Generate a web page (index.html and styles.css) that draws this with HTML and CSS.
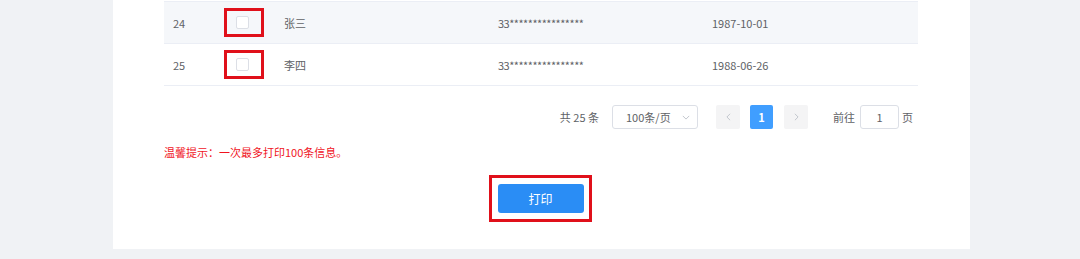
FILE: index.html
```html
<!DOCTYPE html>
<html lang="zh">
<head>
<meta charset="utf-8">
<link rel="stylesheet" href="styles.css">
</head>
<body>
<div class="card">
  <div class="table">
    <div class="row hover">
      <div class="cell c-idx">24</div>
      <div class="cell c-chk"><span class="mark"><span class="checkbox"></span></span></div>
      <div class="cell c-name">张三</div>
      <div class="cell c-id">33****************</div>
      <div class="cell c-date">1987-10-01</div>
    </div>
    <div class="row">
      <div class="cell c-idx">25</div>
      <div class="cell c-chk"><span class="mark"><span class="checkbox"></span></span></div>
      <div class="cell c-name">李四</div>
      <div class="cell c-id">33****************</div>
      <div class="cell c-date">1988-06-26</div>
    </div>
  </div>
  <div class="pager">
    <span class="total">共 25 条</span>
    <span class="sizes">100条/页<svg class="caret" viewBox="0 0 10 6" width="8" height="5"><path d="M1 1 L5 5 L9 1" fill="none" stroke="#c0c4cc" stroke-width="1.2"/></svg></span>
    <span class="btn-nav"><svg viewBox="0 0 6 10" width="5" height="8"><path d="M5 1 L1 5 L5 9" fill="none" stroke="#c0c4cc" stroke-width="1.2"/></svg></span>
    <span class="page active">1</span>
    <span class="btn-nav"><svg viewBox="0 0 6 10" width="5" height="8"><path d="M1 1 L5 5 L1 9" fill="none" stroke="#c0c4cc" stroke-width="1.2"/></svg></span>
    <span class="jump">前往</span>
    <span class="jump-input">1</span>
    <span class="jump-suffix">页</span>
  </div>
  <p class="tip">温馨提示：一次最多打印100条信息。</p>
  <div class="actions">
    <span class="mark big"><button class="print">打印</button></span>
  </div>
</div>
</body>
</html>
```

FILE: styles.css
```css
html, body {
  margin: 0;
  padding: 0;
  background: #f0f2f5;
  font-family: "Noto Sans CJK SC", "Open Sans", sans-serif;
  color: #606266;
}
.card {
  margin-left: 113px;
  width: 857px;
  height: 249px;
  background: #fff;
  box-sizing: border-box;
  padding: 0 52px 0 51px;
}
.table {
  padding-top: 1px;
}
.row {
  display: grid;
  grid-template-columns: 50px 61px 214px 214px 1fr;
  height: 41px;
  border-top: 1px solid #ebeef5;
  align-items: center;
  font-size: 11px;
}
.row:last-child {
  border-bottom: 1px solid #ebeef5;
}
.row.hover {
  background: #f5f7fa;
}
.cell {
  padding-left: 9px;
  white-space: nowrap;
}
.c-id {
  letter-spacing: -0.5px;
}
.c-chk {
  padding-left: 10px;
  display: flex;
  align-items: center;
}
.mark {
  display: inline-flex;
  align-items: center;
  justify-content: center;
  border: 3px solid #e0101a;
  box-sizing: border-box;
}
.c-chk .mark {
  width: 40px;
  height: 29px;
  padding-right: 3px;
}
.checkbox {
  width: 13px;
  height: 13px;
  box-sizing: border-box;
  border: 1px solid #dcdfe6;
  border-radius: 2px;
  background: #fff;
}
.pager {
  display: flex;
  justify-content: flex-end;
  align-items: center;
  margin-top: 19px;
  padding-right: 5px;
  height: 24px;
  font-size: 11px;
}
.total {
  margin-right: 13px;
}
.sizes {
  width: 86px;
  height: 24px;
  box-sizing: border-box;
  border: 1px solid #dcdfe6;
  border-radius: 3px;
  display: flex;
  align-items: center;
  padding-left: 13px;
  position: relative;
  margin-right: 18px;
}
.caret {
  position: absolute;
  right: 7px;
  top: 9px;
}
.btn-nav {
  width: 24px;
  height: 24px;
  background: #f4f4f5;
  border-radius: 2px;
  display: flex;
  align-items: center;
  justify-content: center;
}
.page {
  width: 23px;
  height: 24px;
  border-radius: 2px;
  display: flex;
  align-items: center;
  justify-content: center;
  margin: 0 11px 0 10px;
  font-weight: bold;
}
.page.active {
  background: #409eff;
  color: #fff;
}
.jump {
  margin-left: 25px;
  margin-right: 5px;
}
.jump-input {
  width: 39px;
  height: 24px;
  box-sizing: border-box;
  border: 1px solid #dcdfe6;
  border-radius: 3px;
  display: flex;
  align-items: center;
  justify-content: center;
  margin-right: 3px;
}
.tip {
  margin: 15px 0 0 0;
  color: #f0141e;
  font-size: 11px;
  line-height: 16px;
}
.actions {
  display: flex;
  justify-content: center;
  margin-top: 15px;
  padding-right: 1px;
}
.mark.big {
  width: 103px;
  height: 47px;
}
.print {
  width: 86px;
  height: 29px;
  border: none;
  border-radius: 3px;
  background: #2a8df5;
  color: #fff;
  font-family: inherit;
  font-size: 12px;
  padding: 0;
}
```
